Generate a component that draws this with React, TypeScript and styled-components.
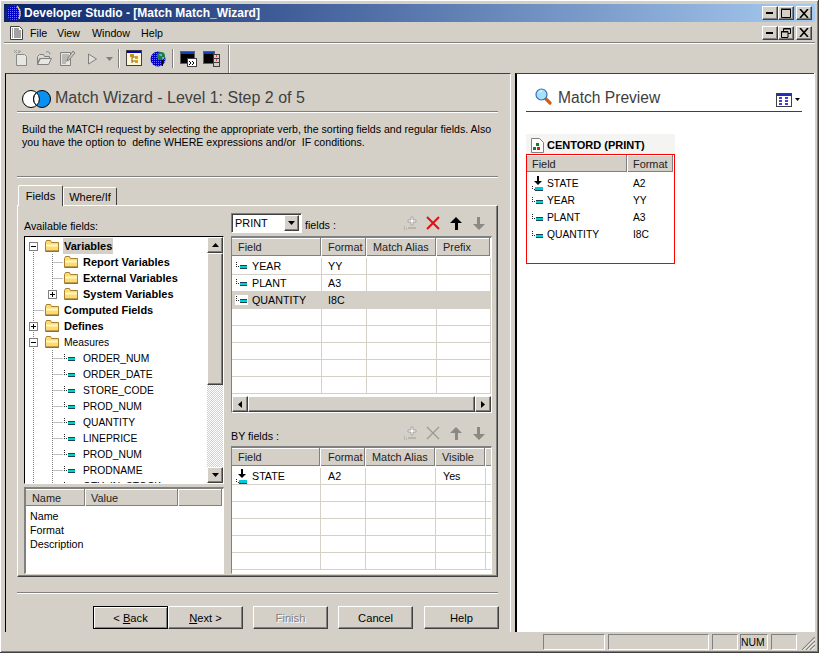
import React from 'react';
import styled, { createGlobalStyle } from 'styled-components';

const Global = createGlobalStyle`
  html, body { margin: 0; padding: 0; background: #d4d0c8; }
  body { font-family: "Liberation Sans", Arial, sans-serif; font-size: 10.7px; color: #000; }
  * { box-sizing: border-box; }
`;

const Win = styled.div`
  width: 819px; height: 653px; background: #d4d0c8; padding: 4px 3px 0 4px; overflow: hidden;
  border-right: 1px solid #404040; border-bottom: 1px solid #404040;
  box-shadow: inset 1px 1px 0 #fff, inset -1px -1px 0 #808080;
  display: flex; flex-direction: column;
`;
const TitleBar = styled.div`
  height: 18px; flex: none; display: flex; align-items: center; padding: 0 3px 0 2px;
  background: linear-gradient(90deg, #0a246a 0%, #a6caf0 100%);
`;
const TitleText = styled.div`
  flex: 1; color: #fff; font-weight: bold; font-size: 12px; padding-left: 2px; white-space: nowrap;
`;
const CtlGroup = styled.div`display: flex; align-items: center;`;
const CtlBtn = styled.div<{ $gap?: number }>`
  width: 16px; height: 14px; background: #d4d0c8; margin-left: ${p => p.$gap ?? 0}px;
  border: 1px solid; border-color: #fff #404040 #404040 #fff; box-shadow: inset -1px -1px 0 #808080;
  display: flex; align-items: center; justify-content: center;
`;
const MenuBar = styled.div`
  height: 21px; flex: none; display: flex; align-items: center; padding: 1px 3px 0 6px;
  border-bottom: 1px solid #808080; box-shadow: 0 1px 0 #fff;
`;
const MenuItems = styled.div`flex: 1; display: flex; align-items: center; margin-left: 7px;`;
const MenuItem = styled.span<{ $w: number }>`width: ${p => p.$w}px; font-size: 10.7px;`;
const Toolbar = styled.div`
  height: 29px; flex: none; margin-top: 1px; display: flex; align-items: center; padding-left: 9px;
`;
const ToolSlot = styled.div<{ $w: number; $l?: number; $b?: number }>`
  width: ${p => p.$w}px; margin-left: ${p => p.$l ?? 0}px; margin-bottom: ${p => p.$b ?? 0}px;
  display: flex; align-items: center; justify-content: center; flex: none;
`;
const ToolSep = styled.div<{ $l: number; $h?: number }>`
  width: 2px; height: ${p => p.$h ?? 19}px; margin-left: ${p => p.$l}px; border-left: 1px solid #808080; border-right: 1px solid #fff;
`;
const Main = styled.div`flex: none; height: 559px; display: flex;`;
const LeftPanel = styled.div`
  width: 506px; margin-left: 1px; border-top: 1px solid #404040; border-left: 1px solid #000; border-right: 1px solid #fff;
  padding-left: 11px; display: flex; flex-direction: column;
`;
const HeadRow = styled.div`
  width: 481px; height: 22px; margin-top: 16px; padding-left: 4px; display: flex; align-items: center; gap: 3px;
  border-bottom: 1px solid #808080; box-shadow: 0 1px 0 #fff;
`;
const VennWrap = styled.div`margin-bottom: 3px; height: 18px; display: flex;`;
const HeadText = styled.div`font-size: 16px; color: #404040; padding-bottom: 5px; white-space: nowrap;`;
const Desc = styled.div`
  margin: 11px 0 0 5px; line-height: 13px; font-size: 10.6px; white-space: pre; height: 26px;
`;
const Rule = styled.div<{ $t: number }>`
  width: 481px; height: 2px; margin-top: ${p => p.$t}px; border-top: 1px solid #808080; border-bottom: 1px solid #fff; flex: none;
`;
const Tabs = styled.div`display: flex; height: 20px; margin-top: 7px; align-items: flex-end; padding-left: 1px;`;
const Tab = styled.div<{ $on?: boolean }>`
  height: ${p => (p.$on ? 21 : 18)}px; width: ${p => (p.$on ? 45 : 54)}px; font-size: 11px;
  background: #d4d0c8; border: 1px solid; border-color: #fff #404040 transparent #fff; border-bottom: 0;
  border-radius: 2px 2px 0 0; text-align: center; line-height: ${p => (p.$on ? 20 : 18)}px; position: relative;
  z-index: ${p => (p.$on ? 2 : 0)}; margin-bottom: ${p => (p.$on ? -1 : 0)}px;
`;
const TabPanel = styled.div`
  width: 481px; height: 372px; flex: none; padding: 0 0 0 6px; display: flex; gap: 7px;
  border: 1px solid; border-color: #fff #404040 #404040 #fff; box-shadow: inset -1px -1px 0 #808080;
`;
const LeftCol = styled.div`width: 200px; display: flex; flex-direction: column;`;
const RightCol = styled.div`width: 261px; display: flex; flex-direction: column;`;
const Caption = styled.div`margin-top: 14px; height: 16px; line-height: 13px; font-size: 10.7px;`;
const Inset = styled.div<{ $h: number; $t?: number }>`
  height: ${p => p.$h}px; margin-top: ${p => p.$t ?? 0}px; flex: none; background: #fff; overflow: hidden;
  border: 1px solid; border-color: #000 #fff #fff #000;
`;
const TreeWrap = styled(Inset)`display: flex;`;
const TreeList = styled.div`flex: 1; height: 100%; overflow: hidden; padding-top: 1px;`;
const TreeRow = styled.div`height: 16px; display: flex; align-items: center; white-space: nowrap;`;
const Label = styled.span<{ $bold?: boolean; $sel?: boolean; $leaf?: boolean }>`
  font-size: ${p => (p.$bold ? 11 : 10.3)}px; font-weight: ${p => (p.$bold ? 'bold' : 'normal')};
  margin-left: ${p => (p.$leaf ? 6 : 3)}px; padding: 0 1px; height: 16px; line-height: ${p => (p.$bold ? 16 : 18)}px;
  background: ${p => (p.$sel ? '#d4d0c8' : 'transparent')};
`;
const VScroll = styled.div`
  width: 16px; height: 100%; flex: none; display: flex; flex-direction: column;
  background: repeating-conic-gradient(#d4d0c8 0 25%, #fff 0 50%) 0 0 / 2px 2px;
`;
const SBtn = styled.div<{ $w?: number; $h?: number }>`
  width: ${p => (p.$w ? `${p.$w}px` : '100%')}; height: ${p => (p.$h ? `${p.$h}px` : '100%')}; flex: none; background: #d4d0c8;
  border: 1px solid; border-color: #fff #404040 #404040 #fff; box-shadow: inset -1px -1px 0 #808080;
  display: flex; align-items: center; justify-content: center;
`;
const VSpacer = styled.div`flex: 1;`;
const DetailHead = styled.div`display: flex; height: 17px; background: #d4d0c8;`;
const DetailBody = styled.div`padding: 3px 0 0 4px; line-height: 14px; font-size: 10.7px;`;
const HeadCell = styled.div<{ $w?: number; $flex?: boolean; $pad?: number }>`
  width: ${p => (p.$w ? `${p.$w}px` : 'auto')}; flex: ${p => (p.$flex ? 1 : 'none')}; padding-left: ${p => p.$pad ?? 6}px;
  background: #d4d0c8; line-height: 18px; font-size: 10.9px; white-space: nowrap; color: #222;
  border-right: 1px solid #fff;
  box-shadow: inset -1px 0 0 #808080, inset 0 -1px 0 #808080, inset 0 1px 0 #fff;
`;
const DetailInset = styled(Inset)`border-color: #808080 #fff #fff #808080; border-width: 2px 1px 1px 2px;`;
const ToolRow = styled.div<{ $t: number }>`
  height: 20px; margin-top: ${p => p.$t}px; display: flex; align-items: center; flex: none;
`;
const Combo = styled.div`
  width: 71px; height: 20px; background: #fff; display: flex; align-items: center; padding: 0 2px 0 3px;
  border: 1px solid; border-color: #808080 #fff #fff #808080; box-shadow: inset 1px 1px 0 #404040;
  font-size: 10.9px;
`;
const ComboText = styled.div`flex: 1;`;
const FieldsLabel = styled.span<{ $l?: number; $t?: number }>`
  margin-left: ${p => p.$l ?? 0}px; padding-top: ${p => p.$t ?? 0}px; font-size: 10.7px; flex: 1; white-space: nowrap;
`;
const IconGroup = styled.div`display: flex; width: 92px; align-items: center; height: 20px; flex: none; margin-right: 2px;`;
const IconSlot = styled.div`width: 23px; display: flex; justify-content: center; align-items: center;`;
const GridInset = styled(Inset)`
  border-color: #808080 #fff #fff #808080; border-width: 2px 1px 1px 1px; display: flex; flex-direction: column;
`;
const GridHead = styled.div`display: flex; height: 18px; flex: none; margin-bottom: 2px; background: #fff;`;
const GridBody = styled.div`flex: 1; overflow: hidden;`;
const GridRow = styled.div<{ $sel?: boolean }>`
  height: 17px; display: flex; border-bottom: 1px solid #d4d0c8; background: ${p => (p.$sel ? '#d4d0c8' : '#fff')};
`;
const GridCell = styled.div<{ $w: number; $flex?: boolean; $pad?: number }>`
  width: ${p => p.$w}px; flex: ${p => (p.$flex ? 1 : 'none')}; border-right: 1px solid #d4d0c8; padding-left: ${p => p.$pad ?? 6}px;
  display: flex; align-items: center; font-size: 10.7px; line-height: 16px; white-space: nowrap; gap: 4px;
`;
const FirstCell = styled(GridCell)`padding-left: 3px;`;
const IconBg = styled.span`display: inline-flex; align-items: center; background: #fff;`;
const HScroll = styled.div`height: 16px; flex: none; display: flex; background: #d4d0c8; margin-top: auto;`;
const HThumb = styled.div`
  flex: 1; border: 1px solid; border-color: #fff #404040 #404040 #fff; box-shadow: inset -1px -1px 0 #808080;
`;
const Footer = styled.div`
  width: 482px; margin-top: 12px; height: 23px; display: flex; justify-content: flex-end; flex: none;
`;
const Btn = styled.div<{ $l?: number; $def?: boolean; $off?: boolean }>`
  width: 75px; height: 23px; margin-left: ${p => p.$l ?? 0}px; font-size: 11.2px; background: #d4d0c8;
  display: flex; align-items: center; justify-content: center;
  color: ${p => (p.$off ? '#808080' : '#000')}; text-shadow: ${p => (p.$off ? '1px 1px 0 #fff' : 'none')};
  border: 1px solid; border-color: ${p => (p.$def ? '#000' : '#fff #404040 #404040 #fff')};
  box-shadow: ${p => (p.$def ? 'inset 1px 1px 0 #fff, inset -1px -1px 0 #808080' : 'inset -1px -1px 0 #808080')};
`;
const Splitter = styled.div`width: 4px; flex: none;`;
const RightPanel = styled.div`
  flex: 1; background: #fff; border-top: 1px solid #404040; border-left: 2px solid #000;
  padding-left: 9px; margin-right: 1px; box-shadow: 1px 0 0 #fff; display: flex; flex-direction: column;
`;
const PrevHead = styled.div`
  width: 276px; height: 23px; margin-top: 15px; display: flex; align-items: center; padding: 0 2px 1px 9px;
  border-bottom: 1px solid #404040;
`;
const PrevTitle = styled.div`flex: 1; margin-left: 6px; padding-bottom: 4px; font-size: 15.6px; color: #404040; white-space: nowrap;`;
const CardHead = styled.div`
  width: 149px; height: 20px; margin-top: 22px; background: #f4f4f2; display: flex; align-items: center; padding: 2px 0 0 5px;
  font-weight: bold; font-size: 11px; gap: 3px; white-space: nowrap;
`;
const RedBox = styled.div`width: 149px; height: 110px; border: 1px solid #f00; background: #fff;`;
const CardHeadRow = styled.div`display: flex; height: 17px; margin-bottom: 3px;`;
const CardRow = styled.div`height: 17px; display: flex; align-items: center; font-size: 10.3px; padding-left: 4px;`;
const CardName = styled.div`width: 102px; display: flex; align-items: center; gap: 3px; white-space: nowrap;`;
const StatusBar = styled.div`
  flex: none; height: 20px; display: flex; align-items: flex-start; padding: 2px 0 0 539px;
`;
const StatusCell = styled.div<{ $w: number; $l?: number }>`
  width: ${p => p.$w}px; height: 16px; margin-left: ${p => p.$l ?? 2}px; font-size: 10.4px; line-height: 15px;
  border: 1px solid; border-color: #808080 #fff #fff #808080;
`;
const Grip = styled.div`margin-left: 5px; margin-top: 3px;`;

const Minus = () => <svg width="8" height="2" viewBox="0 0 8 2"><rect x="0" y="0" width="7" height="2" fill="#000" /></svg>;
const MaxIc = () => <svg width="10" height="10" viewBox="0 0 10 10"><path d="M.5 1.5h9v8h-9zM0 1h10" fill="none" stroke="#000" /></svg>;
const CloseIc = () => <svg width="10" height="9" viewBox="0 0 10 9"><path d="M1 0l8 9M9 0l-8 9" stroke="#000" strokeWidth="1.6" /></svg>;
const RestoreIc = () => <svg width="10" height="10" viewBox="0 0 10 10"><path d="M2.5 3V.5h7v5H7M.5 3.5h6.5v6H.5zM0 4h7M3 1h6" fill="none" stroke="#000" /></svg>;

const Globe = ({ small }: { small?: boolean }) => (
  <svg width="16" height="16" viewBox="0 0 16 16">
    <defs><pattern id={small ? 'htchA' : 'htchB'} width="2" height="2" patternUnits="userSpaceOnUse"><rect width="2" height="2" fill="#0000c8" /><rect width="1" height="1" fill="#6a7cf0" /></pattern></defs>
    <circle cx="8" cy="8" r="7.5" fill={`url(#${small ? 'htchA' : 'htchB'})`} />
    {small ? <path d="M11 1c3 3 4 7 2 13" fill="none" stroke="#f0d040" strokeWidth="1.4" /> : <g><circle cx="11" cy="5" r="4" fill="#208040" /><path d="M9 3h3v2h-2zM12 6h2v2h-2z" fill="#60b0e0" /><path d="M12 9h1v6h-1z" fill="#000" /></g>}
  </svg>
);
const DocIc = () => (
  <svg width="13" height="14" viewBox="0 0 13 14"><path d="M.5.5h9l3 3v10H.5z" fill="#fff" stroke="#404040" /><path d="M2 3h1M4 3h5M2 5h1M4 5h7M2 7h1M4 7h7M2 9h1M4 9h7M2 11h1M4 11h7" stroke="#444" /></svg>
);
const T = ({ children }: { children: React.ReactNode }) => <svg width="17" height="17" viewBox="0 0 17 17">{children}</svg>;
const NewIc = () => <T><path d="M3.5 4.5h8l2 2v9h-10z" fill="#e8e6e0" stroke="#8a8a84" /><path d="M1 3l3-3M6 0v3M1 0l3 3M8 1l-3 2" stroke="#9a9a94" /></T>;
const OpenIc = () => <T><path d="M1.5 6.5l2-2h4l1 2h5v2h-10l-2 6z" fill="#dcdad2" stroke="#808080" /><path d="M1.5 14.5l3-6h11l-3 6z" fill="#e8e6e0" stroke="#808080" /><path d="M10 2c2-1 4 0 4 2M14 4l-1-1" stroke="#8a8a84" fill="none" /></T>;
const PropIc = () => <T><path d="M1.5 2.5h10v13h-10z" fill="#e8e6e0" stroke="#808080" /><path d="M3 5h7M3 7h7M3 9h6M3 11h5M3 13h4" stroke="#8a8a84" /><path d="M14 1l2 2-6 7-2 1 1-3z" fill="#c8c8c0" stroke="#808080" /></T>;
const PlayIc = () => <svg width="11" height="12" viewBox="0 0 11 12"><path d="M1.5 1v10l8-5z" fill="#e0ded8" stroke="#808080" /></svg>;
const Caret = ({ c = '#808080', w = 7 }: { c?: string; w?: number }) => <svg width={w} height={Math.ceil(w / 2)} viewBox={`0 0 ${w} ${Math.ceil(w / 2)}`}><path d={`M0 0h${w}L${w / 2} ${Math.ceil(w / 2)}z`} fill={c} /></svg>;
const TreeIc = () => <T><rect x=".5" y=".5" width="15" height="15" fill="#fff8d8" stroke="#404040" /><rect x="1" y="1" width="14" height="2" fill="#0000c0" /><path d="M6 5v8M6 7h3M6 11h3" stroke="#806000" /><rect x="4" y="4" width="4" height="3" fill="#c09020" /><rect x="9" y="6" width="3" height="3" fill="#d0a030" /><rect x="9" y="10" width="3" height="3" fill="#d0a030" /></T>;
const ConsoleIc = () => <T><rect x=".5" y="1.5" width="14" height="12" fill="#000" stroke="#606060" /><rect x="1" y="2" width="13" height="2" fill="#1040c0" /><rect x="7.5" y="8.5" width="9" height="8" fill="#fff" stroke="#404040" /><path d="M9 11l2 2-2 2M12 11l2 2-2 2" fill="none" stroke="#000" /></T>;
const WinsIc = () => <T><rect x=".5" y="1.5" width="11" height="12" fill="#000" stroke="#606060" /><rect x="1" y="2" width="10" height="2" fill="#1040c0" /><rect x="10.5" y="4.5" width="6" height="12" fill="#d4d0c8" stroke="#404040" /><path d="M11 8.5h5M11 12.5h5" stroke="#404040" /><path d="M13 6h1M13 10h1" stroke="#e02020" strokeWidth="1.5" /></T>;
const VennIc = () => (
  <svg width="31" height="18" viewBox="0 0 31 18">
    <circle cx="10" cy="9" r="8.5" fill="#fff" stroke="#000" />
    <circle cx="21" cy="9" r="8.5" fill="#0a90f0" stroke="#000" />
    <path d="M15.5 2.6a8.5 8.5 0 0 1 0 12.8a8.5 8.5 0 0 1 0-12.8z" fill="#fff" stroke="#000" />
  </svg>
);
const Lens = () => (
  <svg width="17" height="17" viewBox="0 0 17 17"><path d="M10 10l5 5" stroke="#d06018" strokeWidth="3.2" strokeLinecap="round" /><circle cx="6.5" cy="6.5" r="5.5" fill="#a8e0f8" stroke="#3070c0" strokeWidth="1.2" /><path d="M4 4.5a3 3 0 0 1 3-1.5" stroke="#fff" fill="none" /></svg>
);
const ViewIc = () => (
  <svg width="16" height="14" viewBox="0 0 16 14"><rect x=".5" y=".5" width="15" height="13" fill="#fff" stroke="#404040" /><rect x="1" y="1" width="14" height="2" fill="#2030b0" /><path d="M3 5h3M3 8h3M3 11h3M9 5h3M9 8h3M9 11h3" stroke="#0000d0" strokeWidth="1.5" /></svg>
);

const Folder = () => (
  <svg width="16" height="14" viewBox="0 0 16 14"><path d="M1.5 3.5l1-2h4l1 2h7v9h-13z" fill="#fcdc70" stroke="#a88030" /><path d="M2 5.5h12v2H2z" fill="#fff6c0" /><path d="M2 12h13" stroke="#806020" /></svg>
);
const Leaf = () => (
  <svg width="13" height="10" viewBox="0 0 13 10"><path d="M1 1h1v1H1zM1 3h1v1H1zM1 5h1v1H1zM3 5h1v1H3z" fill="#222" /><rect x="5" y="4" width="7" height="4" fill="#00d0d0" /><path d="M5 4.5h7M5 7.5h7" stroke="#204050" /></svg>
);
const SortLeaf = () => (
  <svg width="13" height="15" viewBox="0 0 13 15"><path d="M6 0h2v5h3l-4 4-4-4h3z" fill="#000" /><path d="M1 10h1v1H1zM1 12h1v1H1zM3 13h1v1H3z" fill="#222" /><rect x="4" y="11" width="8" height="3" fill="#00c8d8" /><path d="M4 14.5h8" stroke="#204050" /></svg>
);

const Connector = ({ up, down, right, box }: { up?: boolean; down?: boolean; right?: boolean; box?: 'plus' | 'minus' }) => (
  <svg width="19" height="16" viewBox="0 0 19 16" style={{ flex: 'none' }}>
    {up && <path d="M8.5 0V8" stroke="#808080" strokeDasharray="1 1" />}
    {down && <path d="M8.5 8V16" stroke="#808080" strokeDasharray="1 1" />}
    {right && <path d="M8.5 8.5H19" stroke="#808080" strokeDasharray="1 1" />}
    {box && <g><rect x="4.5" y="4.5" width="8" height="8" fill="#fff" stroke="#808080" /><path d="M6 8.5h5" stroke="#000" />{box === 'plus' && <path d="M8.5 6v5" stroke="#000" />}</g>}
  </svg>
);

const AddIc = () => <svg width="14" height="14" viewBox="0 0 14 14"><path d="M8 1h2v3h3v2h-3v3H8V6H5V4h3z" fill="#fff" stroke="#9a9a94" strokeWidth=".8" /><path d="M1 11h1M1 13h1M3 13h1M5 12h8" stroke="#9a9a94" strokeWidth="1.2" /></svg>;
const DelIc = ({ on }: { on?: boolean }) => <svg width="14" height="14" viewBox="0 0 14 14"><path d="M1 1l12 12M13 1L1 13" stroke={on ? '#e01010' : '#9a9a94'} strokeWidth={on ? 2 : 1.3} /></svg>;
const UpIc = ({ on }: { on?: boolean }) => <svg width="12" height="13" viewBox="0 0 12 13"><path d="M6 0l6 6H8v7H5V6H0z" fill={on ? '#000' : '#8a8a84'} /></svg>;
const DownIc = () => <svg width="12" height="13" viewBox="0 0 12 13"><path d="M4 0h3v7h5l-6 6-6-6h4z" fill="#8a8a84" /></svg>;
const Arrow = ({ d }: { d: 'u' | 'd' | 'l' | 'r' }) => {
  const p = { u: 'M0 4L3.5 0L7 4z', d: 'M0 0h7L3.5 4z', l: 'M4 0v7L0 3.5z', r: 'M0 0v7l4-3.5z' }[d];
  const hor = d === 'l' || d === 'r';
  return <svg width={hor ? 4 : 7} height={hor ? 7 : 4} viewBox={hor ? '0 0 4 7' : '0 0 7 4'}><path d={p} fill="#000" /></svg>;
};
const CardIc = () => (
  <svg width="13" height="15" viewBox="0 0 13 15"><path d="M.5.5h8l4 4v10H.5z" fill="#fff" stroke="#808080" /><rect x="5" y="5" width="3" height="3" fill="#108020" /><rect x="2" y="9" width="3" height="3" fill="#108020" /><rect x="6" y="9" width="3" height="3" fill="#d02020" /></svg>
);
const GripIc = () => <svg width="13" height="13" viewBox="0 0 13 13"><path d="M0 13L13 0M4 13l9-9M8 13l5-5" stroke="#808080" strokeWidth="1.2" /><path d="M1.5 13L13 1.5M5.5 13L13 5.5M9.5 13l3.5-3.5" stroke="#fff" /></svg>;

const tree: { d: 0 | 1; name: string; bold?: boolean; sel?: boolean; box?: 'plus' | 'minus'; leaf?: boolean; last?: boolean; first?: boolean }[] = [
  { d: 0, name: 'Variables', bold: true, sel: true, box: 'minus', first: true },
  { d: 1, name: 'Report Variables', bold: true },
  { d: 1, name: 'External Variables', bold: true },
  { d: 1, name: 'System Variables', bold: true, box: 'plus', last: true },
  { d: 0, name: 'Computed Fields', bold: true },
  { d: 0, name: 'Defines', bold: true, box: 'plus' },
  { d: 0, name: 'Measures', box: 'minus' },
  ...['ORDER_NUM', 'ORDER_DATE', 'STORE_CODE', 'PROD_NUM', 'QUANTITY', 'LINEPRICE', 'PROD_NUM', 'PRODNAME', 'QTY_IN_STOCK'].map(name => ({ d: 1 as const, name, leaf: true })),
];

const cols1 = [90, 45, 70];
const cols2 = [89, 45, 70, 50];

const ActionIcons = ({ on }: { on?: boolean }) => (
  <IconGroup>
    <IconSlot><AddIc /></IconSlot>
    <IconSlot><DelIc on={on} /></IconSlot>
    <IconSlot><UpIc on={on} /></IconSlot>
    <IconSlot><DownIc /></IconSlot>
  </IconGroup>
);

export default function App() {
  return (
    <Win>
      <Global />
      <TitleBar>
        <Globe small />
        <TitleText>Developer Studio - [Match Match_Wizard]</TitleText>
        <CtlGroup>
          <CtlBtn><Minus /></CtlBtn><CtlBtn><MaxIc /></CtlBtn><CtlBtn $gap={2}><CloseIc /></CtlBtn>
        </CtlGroup>
      </TitleBar>
      <MenuBar>
        <DocIc />
        <MenuItems>
          <MenuItem $w={27}>File</MenuItem><MenuItem $w={35}>View</MenuItem><MenuItem $w={49}>Window</MenuItem><MenuItem $w={30}>Help</MenuItem>
        </MenuItems>
        <CtlGroup>
          <CtlBtn><Minus /></CtlBtn><CtlBtn><RestoreIc /></CtlBtn><CtlBtn $gap={2}><CloseIc /></CtlBtn>
        </CtlGroup>
      </MenuBar>
      <Toolbar>
        <ToolSlot $w={17}><NewIc /></ToolSlot>
        <ToolSlot $w={17} $l={6}><OpenIc /></ToolSlot>
        <ToolSlot $w={17} $l={6}><PropIc /></ToolSlot>
        <ToolSlot $w={11} $l={11}><PlayIc /></ToolSlot>
        <ToolSlot $w={7} $l={8}><Caret /></ToolSlot>
        <ToolSep $l={5} />
        <ToolSlot $w={17} $l={6}><TreeIc /></ToolSlot>
        <ToolSlot $w={17} $l={6}><Globe /></ToolSlot>
        <ToolSep $l={6} />
        <ToolSlot $w={17} $l={6}><ConsoleIc /></ToolSlot>
        <ToolSlot $w={17} $l={6}><WinsIc /></ToolSlot>
        <ToolSep $l={8} $h={28} />
      </Toolbar>
      <Main>
        <LeftPanel>
          <HeadRow><VennWrap><VennIc /></VennWrap><HeadText>Match Wizard - Level 1: Step 2 of 5</HeadText></HeadRow>
          <Desc>{'Build the MATCH request by selecting the appropriate verb, the sorting fields and regular fields. Also\nyou have the option to  define WHERE expressions and/or  IF conditions.'}</Desc>
          <Rule $t={27} />
          <Tabs><Tab $on>Fields</Tab><Tab>Where/If</Tab></Tabs>
          <TabPanel>
            <LeftCol>
              <Caption>Available fields:</Caption>
              <TreeWrap $h={248}>
                <TreeList>
                  {tree.map((n, i) => (
                    <TreeRow key={i}>
                      {n.d === 0 ? (
                        <Connector up={!n.first} down right={!n.box} box={n.box} />
                      ) : (
                        <>
                          <Connector up down />
                          <Connector up down={!n.last} right={!n.box} box={n.box} />
                        </>
                      )}
                      {n.leaf ? <Leaf /> : <Folder />}
                      <Label $bold={n.bold} $sel={n.sel} $leaf={n.leaf}>{n.name}</Label>
                    </TreeRow>
                  ))}
                </TreeList>
                <VScroll>
                  <SBtn $h={16}><Arrow d="u" /></SBtn>
                  <SBtn $h={132} />
                  <VSpacer />
                  <SBtn $h={16}><Arrow d="d" /></SBtn>
                </VScroll>
              </TreeWrap>
              <DetailInset $h={87} $t={3}>
                <DetailHead>
                  <HeadCell $w={60}>Name</HeadCell>
                  <HeadCell $w={93} $pad={5}>Value</HeadCell>
                  <HeadCell $flex />
                </DetailHead>
                <DetailBody>Name<br />Format<br />Description</DetailBody>
              </DetailInset>
            </LeftCol>
            <RightCol>
              <ToolRow $t={7}>
                <Combo><ComboText>PRINT</ComboText><SBtn $w={15} $h={16}><Caret c="#000" /></SBtn></Combo>
                <FieldsLabel $l={3} $t={3}>fields :</FieldsLabel>
                <ActionIcons on />
              </ToolRow>
              <GridInset $h={177} $t={3}>
                <GridHead>
                  <HeadCell $w={cols1[0]}>Field</HeadCell>
                  <HeadCell $w={cols1[1]}>Format</HeadCell>
                  <HeadCell $w={cols1[2]}>Match Alias</HeadCell>
                  <HeadCell $flex>Prefix</HeadCell>
                </GridHead>
                <GridBody>
                  {[['YEAR', 'YY'], ['PLANT', 'A3'], ['QUANTITY', 'I8C'], ['', ''], ['', ''], ['', ''], ['', ''], ['', '']].map(([f, t], i) => (
                    <GridRow key={i} $sel={i === 2}>
                      <FirstCell $w={cols1[0]}>{f && <IconBg><Leaf /></IconBg>}{f}</FirstCell>
                      <GridCell $w={cols1[1]}>{t}</GridCell>
                      <GridCell $w={cols1[2]} />
                      <GridCell $w={50} $flex />
                    </GridRow>
                  ))}
                </GridBody>
                <HScroll>
                  <SBtn $w={16} $h={16}><Arrow d="l" /></SBtn>
                  <HThumb />
                  <SBtn $w={16} $h={16}><Arrow d="r" /></SBtn>
                </HScroll>
              </GridInset>
              <ToolRow $t={10}>
                <FieldsLabel $t={5}>BY fields :</FieldsLabel>
                <ActionIcons />
              </ToolRow>
              <GridInset $h={128} $t={3}>
                <GridHead>
                  <HeadCell $w={cols2[0]}>Field</HeadCell>
                  <HeadCell $w={cols2[1]} $pad={7}>Format</HeadCell>
                  <HeadCell $w={cols2[2]}>Match Alias</HeadCell>
                  <HeadCell $w={cols2[3]}>Visible</HeadCell>
                  <HeadCell $flex />
                </GridHead>
                <GridBody>
                  {[['STATE', 'A2', 'Yes'], ['', '', ''], ['', '', ''], ['', '', ''], ['', '', ''], ['', '', '']].map(([f, t, v], i) => (
                    <GridRow key={i}>
                      <FirstCell $w={cols2[0]}>{f && <SortLeaf />}{f}</FirstCell>
                      <GridCell $w={cols2[1]} $pad={7}>{t}</GridCell>
                      <GridCell $w={cols2[2]} />
                      <GridCell $w={cols2[3]} $pad={7}>{v}</GridCell>
                      <GridCell $w={5} $flex />
                    </GridRow>
                  ))}
                </GridBody>
              </GridInset>
            </RightCol>
          </TabPanel>
          <Rule $t={15} />
          <Footer>
            <Btn $def><span>&lt; <u>B</u>ack</span></Btn>
            <Btn><span><u>N</u>ext &gt;</span></Btn>
            <Btn $l={10} $off>Finish</Btn>
            <Btn $l={10}>Cancel</Btn>
            <Btn $l={11}>Help</Btn>
          </Footer>
        </LeftPanel>
        <Splitter />
        <RightPanel>
          <PrevHead>
            <ToolSlot $w={17} $b={6}><Lens /></ToolSlot>
            <PrevTitle>Match Preview</PrevTitle>
            <ViewIc />
            <ToolSlot $w={6} $l={2}><Caret c="#000" w={5} /></ToolSlot>
          </PrevHead>
          <CardHead><CardIc />CENTORD (PRINT)</CardHead>
          <RedBox>
            <CardHeadRow>
              <HeadCell $w={101} $pad={5}>Field</HeadCell>
              <HeadCell $w={46} $pad={5}>Format</HeadCell>
            </CardHeadRow>
            {[['STATE', 'A2'], ['YEAR', 'YY'], ['PLANT', 'A3'], ['QUANTITY', 'I8C']].map(([f, t], i) => (
              <CardRow key={f}><CardName>{i === 0 ? <SortLeaf /> : <Leaf />}{f}</CardName>{t}</CardRow>
            ))}
          </RedBox>
        </RightPanel>
      </Main>
      <StatusBar>
        <StatusCell $w={62} $l={0} />
        <StatusCell $w={101} $l={3} />
        <StatusCell $w={26} $l={3} />
        <StatusCell $w={28} $l={2}>NUM</StatusCell>
        <StatusCell $w={26} $l={3} />
        <Grip><GripIc /></Grip>
      </StatusBar>
    </Win>
  );
}
